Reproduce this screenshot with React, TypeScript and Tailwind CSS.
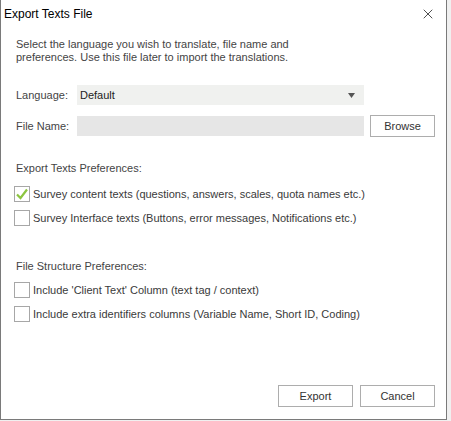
import { X } from 'lucide-react'

function Check({ checked, label }: { checked?: boolean; label: string }) {
  return (
    <label className="flex h-[16px] items-center">
      <span className="flex h-[16px] w-[16px] items-center justify-center border border-[#a7a7a7] bg-white">
        {checked && (
          <svg width="14" height="14" viewBox="0 0 14 14">
            <path d="M2 7.5 L5.5 11 L12 2.5" fill="none" stroke="#8cc540" strokeWidth="2.2" />
          </svg>
        )}
      </span>
      <span className="ml-[3px] text-[#3a3a3a]">{label}</span>
    </label>
  )
}

function Button({ children, className = '' }: { children: string; className?: string }) {
  return (
    <button className={`flex h-[22px] items-center justify-center border border-[#adadad] bg-white text-[#333] ${className}`}>
      {children}
    </button>
  )
}

export default function App() {
  return (
    <div
      className="flex h-[421px] w-[451px] bg-[#f0f0f0] text-[11px] leading-[14px]"
      style={{ fontFamily: '"Liberation Sans", Arial, sans-serif' }}
    >
      <div className="flex h-[420px] w-[447px] flex-col border-x border-b border-[#7a7a7a] bg-white">
        {/* Title bar */}
        <div className="flex h-[28px] items-center justify-between pl-[3px] pr-[10px]">
          <span className="text-[12px] text-black">Export Texts File</span>
          <X size={16} strokeWidth={1.2} className="text-[#222]" />
        </div>

        <div className="flex flex-1 flex-col pl-[15px] pr-[11px] pb-[12px]">
          <p className="mt-[10px] leading-[13px] text-[#444]">
            Select the language you wish to translate, file name and
            <br />
            preferences. Use this file later to import the translations.
          </p>

          <div className="mt-[21px] flex items-center">
            <span className="w-[61px] text-[#444]">Language:</span>
            <div className="flex h-[20px] w-[287px] items-center justify-between bg-[#f0f1ef] pl-[3px] pr-[9px] text-[#222]">
              <span>Default</span>
              <svg width="7" height="5" viewBox="0 0 7 5">
                <path d="M0 0 H7 L3.5 5 Z" fill="#555" />
              </svg>
            </div>
          </div>

          <div className="mt-[10px] flex items-center">
            <span className="w-[61px] text-[#444]">File Name:</span>
            <div className="h-[20px] w-[287px] bg-[#e6e6e6]" />
            <Button className="ml-[6px] w-[65px]">Browse</Button>
          </div>

          <p className="mt-[24px] text-[#444]">Export Texts Preferences:</p>
          <div className="-ml-[2px] mt-[11px] flex flex-col gap-[8px]">
            <Check checked label="Survey content texts (questions, answers, scales, quota names etc.)" />
            <Check label="Survey Interface texts (Buttons, error messages, Notifications etc.)" />
          </div>

          <p className="mt-[33px] text-[#444]">File Structure Preferences:</p>
          <div className="-ml-[2px] mt-[9px] flex flex-col gap-[8px]">
            <Check label="Include 'Client Text' Column (text tag / context)" />
            <Check label="Include extra identifiers columns (Variable Name, Short ID, Coding)" />
          </div>

          <div className="mt-auto flex justify-end gap-[7px]">
            <Button className="w-[75px]">Export</Button>
            <Button className="w-[75px]">Cancel</Button>
          </div>
        </div>
      </div>
    </div>
  )
}
